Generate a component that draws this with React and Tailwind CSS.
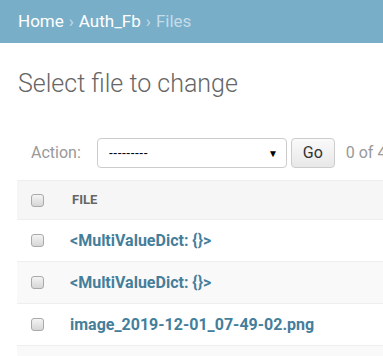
const Checkbox = () => (
  <span className="block w-[13px] h-[13px] rounded-[3px] border border-[#a9a9a9] bg-gradient-to-b from-[#f4f4f4] to-[#d6d6d6]" />
);

const rows = [
  { name: "<MultiValueDict: {}>", bg: "bg-white" },
  { name: "<MultiValueDict: {}>", bg: "bg-[#f9f9f9]" },
  { name: "image_2019-12-01_07-49-02.png", bg: "bg-white" },
];

export default function App() {
  return (
    <div className="w-[383px] h-[356px] overflow-hidden bg-white font-['Roboto',sans-serif]">
      <div className="h-[43px] bg-[#79aec8] px-[18px] flex items-center text-[17px] text-white whitespace-nowrap">
        <span>Home</span>
        <span className="mx-[5px] text-[#c4dce8]">›</span>
        <span>Auth_Fb</span>
        <span className="mx-[5px] text-[#c4dce8]">›</span>
        <span className="text-[#c4dce8]">Files</span>
      </div>

      <div className="pl-[17px] w-[600px]">
        <h1 className="mt-[26px] ml-px text-[25px] leading-[29px] font-light text-[#666]">
          Select file to change
        </h1>

        <div className="mt-[40px] h-[30px] flex items-center text-[16px] whitespace-nowrap">
          <span className="ml-[14px] text-[#999]">Action:</span>
          <div className="ml-[16px] w-[190px] h-[30px] rounded-[4px] border border-[#ccc] flex items-center justify-between pl-[11px] pr-[8px]">
            <span className="font-['Liberation_Sans',sans-serif] text-[13px] text-black">---------</span>
            <span className="text-[10px] text-black">▼</span>
          </div>
          <button className="ml-[4px] w-[44px] h-[30px] rounded-[4px] border border-[#ccc] bg-gradient-to-b from-[#fafafa] to-[#e8e8e8] text-[16px] text-[#333]">
            Go
          </button>
          <span className="ml-[11px] text-[#999]">0 of 4 selected</span>
        </div>

        <div className="mt-[12px] border-t border-[#eee]">
          <div className="h-[39px] bg-[#f6f6f6] border-b border-[#eee] flex items-center">
            <div className="pl-[14px] w-[55px]">
              <Checkbox />
            </div>
            <span className="text-[13px] font-bold text-[#666] uppercase">File</span>
          </div>
          {rows.map((r, i) => (
            <div
              key={i}
              className={`h-[42px] ${r.bg} border-b border-[#eee] flex items-center`}
            >
              <div className="pl-[14px] w-[53px]">
                <Checkbox />
              </div>
              <span className="text-[16px] font-bold text-[#447e9b]">{r.name}</span>
            </div>
          ))}
          <div className="h-[20px] bg-[#f9f9f9]" />
        </div>
      </div>
    </div>
  );
}
